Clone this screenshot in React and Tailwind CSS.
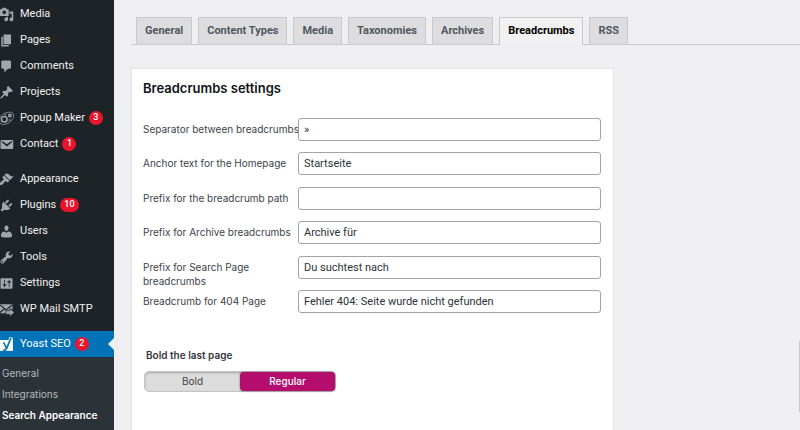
const dash = {
  media: 'M13 11V4c0-.55-.45-1-1-1h-1.67L9 1H5L3.67 3H2c-.55 0-1 .45-1 1v7c0 .55.45 1 1 1h10c.55 0 1-.45 1-1zM7 4.5c1.38 0 2.5 1.12 2.5 2.5S8.38 9.5 7 9.5 4.5 8.38 4.5 7 5.62 4.5 7 4.5zM14 6h5v10.5c0 1.38-1.12 2.5-2.5 2.5S14 17.88 14 16.5s1.12-2.5 2.5-2.5c.17 0 .34.02.5.05V9h-3V6zm-4 8.05V13h2v3.5c0 1.38-1.12 2.5-2.5 2.5S7 17.88 7 16.5 8.12 14 9.5 14c.17 0 .34.02.5.05z',
  pages: 'M6 15V2h10v13H6zm-1 1h8v2H3V5h2v11z',
  comments: 'M5 2h9c1.1 0 2 .9 2 2v7c0 1.1-.9 2-2 2h-2l-5 5v-5H5c-1.1 0-2-.9-2-2V4c0-1.1.9-2 2-2z',
  pin: 'M10.44 3.02l1.82-1.82 6.36 6.35-1.83 1.82c-1.05-.68-2.48-.57-3.41.36l-.75.75c-.92.93-1.04 2.35-.35 3.41l-1.83 1.82-2.41-2.41-2.8 2.79c-.42.42-3.38 2.71-3.8 2.29s1.86-3.39 2.28-3.81l2.79-2.79L4.1 9.36l1.83-1.82c1.05.69 2.48.57 3.4-.36l.75-.75c.93-.92 1.05-2.35.36-3.41z',
  email: 'M3.87 4h13.25C18.37 4 19 4.59 19 5.79v8.42c0 1.19-.63 1.79-1.88 1.79H3.87c-1.25 0-1.88-.6-1.88-1.79V5.79c0-1.2.63-1.79 1.88-1.79zm6.62 8.6l6.74-5.53c.24-.2.43-.66.13-1.07-.29-.41-.82-.42-1.17-.17l-5.7 3.86L4.8 5.83c-.35-.25-.88-.24-1.17.17-.3.41-.11.87.13 1.07z',
  appearance: 'M14.48 11.06L7.41 3.99l1.5-1.5c.5-.56 2.3-.47 3.51.32 1.21.8 1.43 1.28 2.91 2.1 1.18.64 2.45 1.26 4.45.85zm-.71.71L6.7 4.7 4.93 6.47c-.39.39-.39 1.02 0 1.41l1.06 1.06c.39.39.39 1.03 0 1.42-.6.6-1.43 1.11-2.21 1.69-.35.26-.7.53-1.01.84C1.43 14.23.4 16.08 1.4 17.07c.99 1 2.84-.03 4.18-1.36.31-.31.58-.66.85-1.02.57-.78 1.08-1.61 1.69-2.21.39-.39 1.02-.39 1.41 0l1.06 1.06c.39.39 1.02.39 1.41 0z',
  plugins: 'M13.11 4.36L9.87 7.6 8 5.73l3.24-3.24c.35-.34 1.05-.2 1.56.32.52.51.66 1.21.31 1.55zm-8 1.77l.91-1.12 9.01 9.01-1.19.84c-.71.71-2.63 1.16-3.82 1.16H6.14L4.9 17.26c-.59.59-1.54.59-2.12 0-.59-.58-.59-1.53 0-2.12l1.24-1.24v-3.88c0-1.13.4-3.19 1.09-3.89zm7.26 3.97l3.24-3.24c.34-.35 1.04-.21 1.55.31.52.51.66 1.21.31 1.55l-3.24 3.25z',
  users: 'M10 9.25c-2.27 0-2.73-3.44-2.73-3.44C7 4.02 7.82 2 9.97 2c2.16 0 2.98 2.02 2.71 3.81 0 0-.41 3.44-2.68 3.44zm0 2.57L12.72 10c2.39 0 4.52 2.33 4.52 4.53v2.49s-3.65 1.13-7.24 1.13c-3.65 0-7.24-1.13-7.24-1.13v-2.49c0-2.25 1.94-4.48 4.47-4.48z',
  tools: 'M16.68 9.77c-1.34 1.34-3.3 1.67-4.95.99l-5.41 6.52c-.99.99-2.59.99-3.58 0s-.99-2.59 0-3.57l6.52-5.42c-.68-1.65-.35-3.61.99-4.95 1.28-1.28 3.12-1.62 4.72-1.06l-2.89 2.89 2.82 2.82 2.86-2.87c.53 1.58.18 3.39-1.08 4.65zM3.81 16.21c.4.39 1.04.39 1.43 0 .4-.4.4-1.04 0-1.43-.39-.4-1.03-.4-1.43 0-.39.39-.39 1.03 0 1.43z',
  settings: 'M18 16V4c0-.55-.45-1-1-1H3c-.55 0-1 .45-1 1v12c0 .55.45 1 1 1h14c.55 0 1-.45 1-1zM8 11h1c.55 0 1 .45 1 1s-.45 1-1 1H8v1.5c0 .28-.22.5-.5.5s-.5-.22-.5-.5V13H6c-.55 0-1-.45-1-1s.45-1 1-1h1V5.5c0-.28.22-.5.5-.5s.5.22.5.5V11zm5-2h-1c-.55 0-1-.45-1-1s.45-1 1-1h1V5.5c0-.28.22-.5.5-.5s.5.22.5.5V7h1c.55 0 1 .45 1 1s-.45 1-1 1h-1v5.5c0 .28-.22.5-.5.5s-.5-.22-.5-.5V9z',
};

function Glyph({ name }) {
  if (name === 'popup') {
    return (
      <g fill="none" stroke="currentColor">
        <path d="M1 9C3 4.500 9 1.500 15 1.500C20.500 2 20.500 8 17 12C13.500 16.500 7 19 3 17.500C0 16 0 12 1 9Z" strokeWidth="1" />
        <circle cx="7" cy="11" r="3.800" strokeWidth="2" />
        <circle cx="14.500" cy="6" r="1.700" strokeWidth="1.800" />
        <circle cx="14" cy="12" r="0.800" strokeWidth="1" />
        <circle cx="8.500" cy="5" r="0.700" strokeWidth="1" />
      </g>
    );
  }
  if (name === 'smtp') {
    return (
      <g>
        <path d="M1 3h17v7h-3v5H1z" fill="currentColor" />
        <path d="M1.500 4l8 6.500L17.500 4M1.500 14l5.500-5" fill="none" stroke="#1d2327" strokeWidth="1.500" />
        <path d="M9 11.500h5.500V8.500l6 5.500-6 5.500v-3H9z" fill="currentColor" stroke="#1d2327" strokeWidth="1" />
      </g>
    );
  }
  if (name === 'yoast') {
    return (
      <g fill="none">
        <path d="M1 4h17.500v14.500H1z" fill="#fff" />
        <path d="M16.500 0.500L11 14.500" stroke="#fff" strokeWidth="5" />
        <path d="M6 7l4 8M16 1L10.500 14.500C9.500 17 8 18 5.500 18" stroke="#0073b8" strokeWidth="2.200" />
      </g>
    );
  }
  return <path d={dash[name]} fill="currentColor" />;
}

const groups = [
  [
    ['Media', 'media'],
    ['Pages', 'pages'],
    ['Comments', 'comments'],
    ['Projects', 'pin'],
    ['Popup Maker', 'popup', 3],
    ['Contact', 'email', 1],
  ],
  [
    ['Appearance', 'appearance'],
    ['Plugins', 'plugins', 10],
    ['Users', 'users'],
    ['Tools', 'tools'],
    ['Settings', 'settings'],
    ['WP Mail SMTP', 'smtp'],
  ],
  [['Yoast SEO', 'yoast', 2]],
];

function MenuItem({ label, icon, count }) {
  const active = icon === 'yoast';
  return (
    <li>
      <a
        href="#"
        className={
          active
            ? 'relative flex h-[26px] items-center bg-[#0073b8] text-white'
            : 'flex h-[26px] items-center text-[#f0f0f1]'
        }
      >
        <svg viewBox="0 0 20 20" className="-ml-px mr-1.5 size-[15px] shrink-0 text-[#a0a7ae]" aria-hidden="true">
          <Glyph name={icon} />
        </svg>
        <span className="whitespace-nowrap">{label}</span>
        {count && (
          <span className="ml-1 flex h-3.5 min-w-3.5 items-center justify-center rounded-full bg-[#e9152d] px-1 text-[9px] font-medium text-white">
            {count}
          </span>
        )}
        {active && <span className="absolute right-0 border-y-[6px] border-r-[6px] border-y-transparent border-r-[#efeff1]" />}
      </a>
    </li>
  );
}

const tabs = ['General', 'Content Types', 'Media', 'Taxonomies', 'Archives', 'Breadcrumbs', 'RSS'];

const fields = [
  ['separator', 'Separator between breadcrumbs', '»'],
  ['home', 'Anchor text for the Homepage', 'Startseite'],
  ['path', 'Prefix for the breadcrumb path', ''],
  ['archive', 'Prefix for Archive breadcrumbs', 'Archive für'],
  ['search', 'Prefix for Search Page\nbreadcrumbs', 'Du suchtest nach'],
  ['missing', 'Breadcrumb for 404 Page', 'Fehler 404: Seite wurde nicht gefunden'],
];

export default function App() {
  return (
    <div className="flex h-screen overflow-hidden bg-[#efeff1] font-[Roboto,sans-serif]">
      <nav className="w-[114px] shrink-0 overflow-hidden bg-[#1d2327] pt-px text-[11px]">
        {groups.map((items, i) => (
          <ul key={i} className={i === 0 ? '' : 'mt-[9px]'}>
            {items.map(([label, icon, count]) => (
              <MenuItem key={label} label={label} icon={icon} count={count} />
            ))}
          </ul>
        ))}
        <ul className="h-full bg-[#2c3338] pt-1.5 pl-0.5 font-[Inter,sans-serif] text-[10px] text-[#b4b9be]">
          <li><a href="#" className="flex h-[21px] items-center">General</a></li>
          <li><a href="#" className="flex h-[21px] items-center">Integrations</a></li>
          <li><a href="#" className="flex h-[21px] items-center whitespace-nowrap font-semibold text-white">Search Appearance</a></li>
        </ul>
      </nav>

      <main className="relative min-w-0 flex-1 pl-[17px]">
        <div role="tablist" className="mt-[17px] flex gap-[6px] border-b border-[#c9cacd] pl-[5px] text-[11px] font-bold">
          {tabs.map((tab) => (
            <button
              key={tab}
              type="button"
              role="tab"
              aria-selected={tab === 'Breadcrumbs'}
              className={
                tab === 'Breadcrumbs'
                  ? '-mb-px h-7 border border-b-0 border-[#c9cacd] bg-[#f1f1f2] px-2 whitespace-nowrap text-black'
                  : 'h-[27px] border border-b-0 border-[#c9cacd] bg-[#dddddf] px-2 whitespace-nowrap text-[#50575e]'
              }
            >
              {tab}
            </button>
          ))}
        </div>

        <section className="mt-[23px] h-full max-w-[483px] border border-[#e3e4e6] bg-white pr-3 pl-[11px]">
          <h2 className="mt-2.5 font-[Inter,sans-serif] text-[13px] leading-[18px] font-semibold text-[#0f1417]">Breadcrumbs settings</h2>
          <div className="mt-[21px] flex h-[195px] flex-col justify-between">
            {fields.map(([id, label, value]) => (
              <div key={id} className="flex h-[23px] items-start">
                <label htmlFor={id} className="w-[155px] shrink-0 pt-1 font-[Inter,sans-serif] text-[10px] leading-[14px] whitespace-pre text-[#3c434a]">
                  {label}
                </label>
                <input
                  id={id}
                  type="text"
                  defaultValue={value}
                  className="h-[23px] min-w-0 flex-1 rounded-[3px] border border-[#a0a3a8] bg-white px-[5px] text-[11px] text-[#2c3338]"
                />
              </div>
            ))}
          </div>

          <fieldset className="mt-[35px] pl-px">
            <legend className="pl-0.5 font-[Inter,sans-serif] text-[10px] leading-[14px] font-semibold text-[#32373c]">Bold the last page</legend>
            <div className="mt-[9px] flex h-[21px] w-[192px] rounded-[5px] border border-[#c4c4c4] bg-[#dcdcdc] font-[Inter,sans-serif] text-[10px] shadow-[inset_0_1px_2px_rgba(0,0,0,0.25)]">
              <label className="flex flex-1 items-center justify-center text-[#444]">
                <input type="radio" name="bold-last" className="sr-only" />
                Bold
              </label>
              <label className="flex flex-1 items-center justify-center rounded-[4px] bg-[#b50d6d] font-medium text-white shadow-[0_0_2px_rgba(0,0,0,0.6)]">
                <input type="radio" name="bold-last" defaultChecked className="sr-only" />
                Regular
              </label>
            </div>
          </fieldset>
        </section>
        <div className="absolute top-[341px] right-0 h-[71px] w-px bg-[#c6c6c8]" />
      </main>
    </div>
  );
}
